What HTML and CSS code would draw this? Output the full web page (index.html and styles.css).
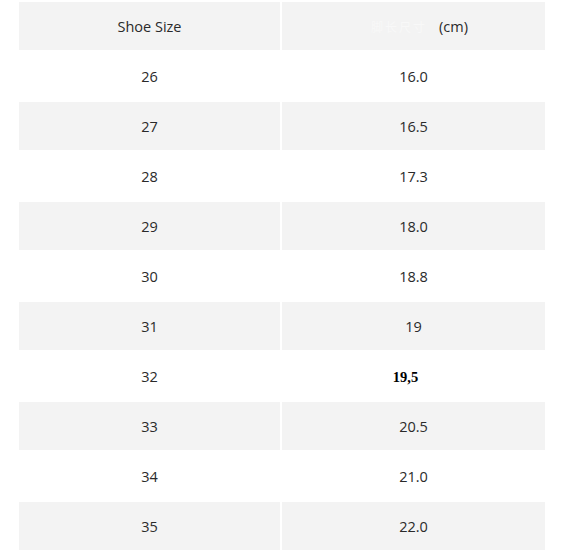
FILE: index.html
```html
<!DOCTYPE html>
<html>
<head>
<meta charset="utf-8">
<link rel="stylesheet" href="styles.css">
</head>
<body>
<table class="size-table">
  <tr class="shade">
    <td>Shoe Size</td>
    <td><span class="faded">脚长尺寸</span>(cm)</td>
  </tr>
  <tr><td>26</td><td>16.0</td></tr>
  <tr class="shade"><td>27</td><td>16.5</td></tr>
  <tr><td>28</td><td>17.3</td></tr>
  <tr class="shade"><td>29</td><td>18.0</td></tr>
  <tr><td>30</td><td>18.8</td></tr>
  <tr class="shade"><td>31</td><td>19</td></tr>
  <tr><td>32</td><td><span class="pasted">19,5</span></td></tr>
  <tr class="shade"><td>33</td><td>20.5</td></tr>
  <tr><td>34</td><td>21.0</td></tr>
  <tr class="shade"><td>35</td><td>22.0</td></tr>
</table>
</body>
</html>
```
FILE: styles.css
```css
html, body {
  margin: 0;
  padding: 0;
  background: #ffffff;
}
body {
  padding-left: 17px;
  font-family: "Open Sans", "Noto Sans", "Noto Sans CJK SC", sans-serif;
  font-size: 14.5px;
  color: #2a2a2a;
}
.size-table {
  border-collapse: separate;
  border-spacing: 2px;
  table-layout: fixed;
  width: 530px;
}
.size-table td {
  height: 48px;
  padding: 0;
  text-align: center;
  vertical-align: middle;
}
.size-table td:first-child {
  width: 261px;
}
.size-table td:last-child {
  width: 263px;
}
.shade td {
  background: #f3f3f3;
}
.faded {
  display: inline-block;
  width: 80px;
  color: #f8f8f8;
  font-size: 12px;
  letter-spacing: 2px;
}
.pasted {
  display: inline-block;
  padding-right: 16px;
  font-family: "Liberation Serif", serif;
  font-weight: bold;
  font-size: 14.5px;
  color: #000000;
}
```
